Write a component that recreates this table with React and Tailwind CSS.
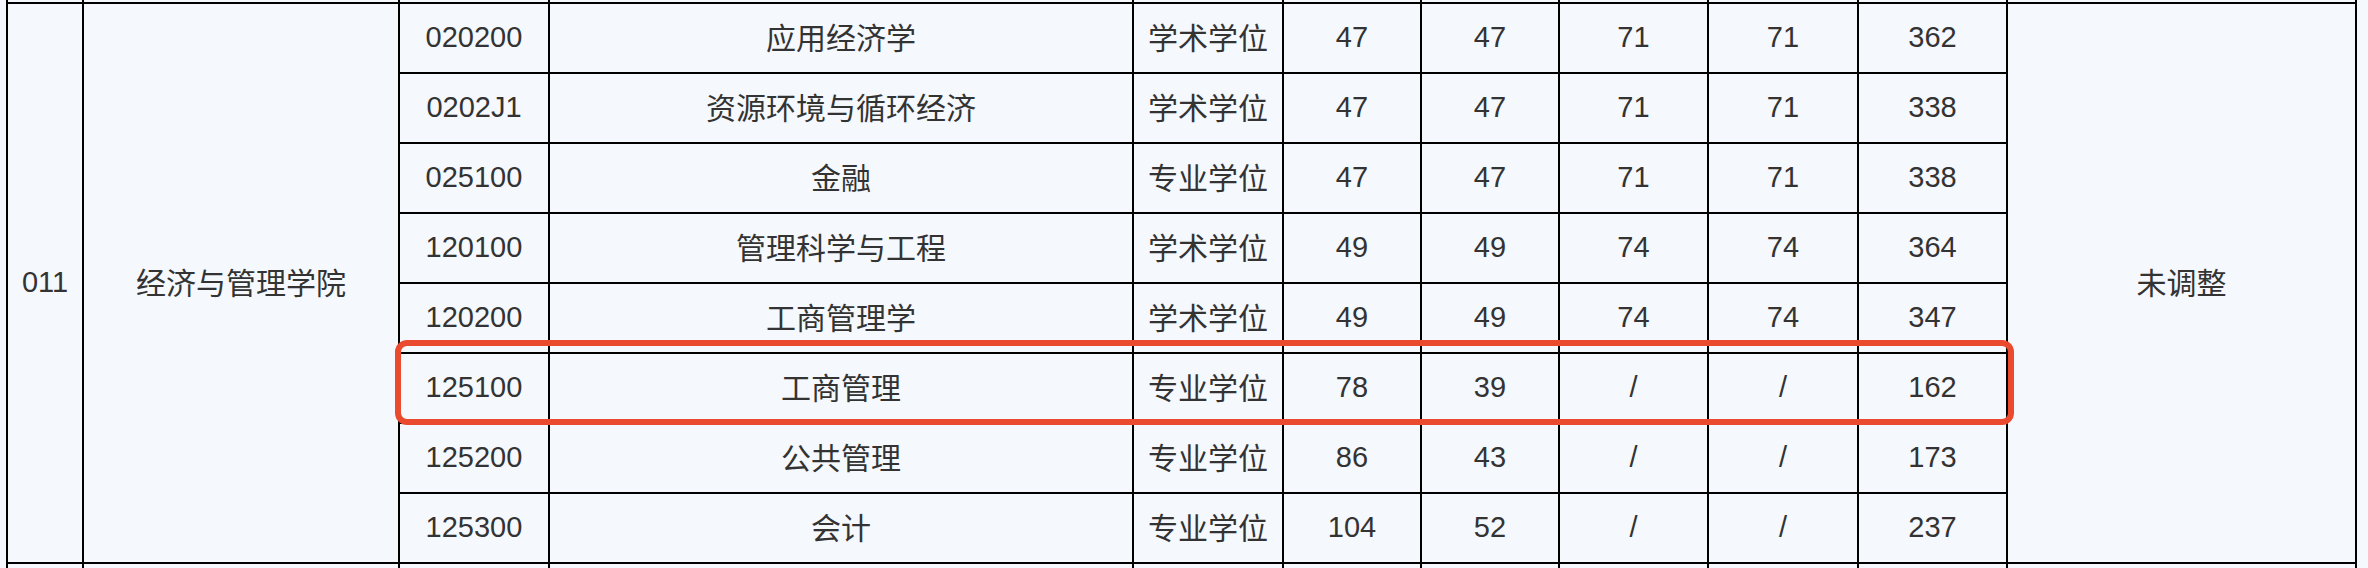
import React from 'react'

const rows = [
  ['020200', '应用经济学', '学术学位', '47', '47', '71', '71', '362'],
  ['0202J1', '资源环境与循环经济', '学术学位', '47', '47', '71', '71', '338'],
  ['025100', '金融', '专业学位', '47', '47', '71', '71', '338'],
  ['120100', '管理科学与工程', '学术学位', '49', '49', '74', '74', '364'],
  ['120200', '工商管理学', '学术学位', '49', '49', '74', '74', '347'],
  ['125100', '工商管理', '专业学位', '78', '39', '/', '/', '162'],
  ['125200', '公共管理', '专业学位', '86', '43', '/', '/', '173'],
  ['125300', '会计', '专业学位', '104', '52', '/', '/', '237'],
]

const cell = 'border-l-2 border-t-2 border-black flex items-center justify-center'

const App = () => {
  const stub = Array.from({ length: 11 })

  return (
    <div
      className="relative h-[568px] overflow-hidden bg-[#f5f8fc] text-[#333333]"
      style={{ fontFamily: '"Liberation Sans", "Noto Sans CJK SC", sans-serif' }}
    >
      <div className="ml-[6px] w-[2351px] border-r-2 border-black grid grid-cols-[76px_316px_150px_584px_150px_138px_138px_149px_150px_149px_349px] grid-rows-[2px_repeat(8,70px)_40px]">
        {/* row above, cut off */}
        {stub.map((_, i) => (
          <div key={'top' + i} className="border-l-2 border-black" />
        ))}

        {/* merged columns */}
        <div className={cell + ' col-start-1 row-start-2 row-span-8 text-[29px]'}>011</div>
        <div className={cell + ' col-start-2 row-start-2 row-span-8 text-[30px]'}>经济与管理学院</div>
        <div className={cell + ' col-start-11 row-start-2 row-span-8 text-[30px]'}>未调整</div>

        {rows.map((r) =>
          r.map((v, j) => (
            <div
              key={r[0] + j}
              className={cell + (j == 1 || j == 2 ? ' text-[30px]' : ' text-[29px]')}
            >
              {v}
            </div>
          ))
        )}

        {/* next row, cut off */}
        {stub.map((_, i) => (
          <div key={'bot' + i} className={cell} />
        ))}
      </div>

      {/* highlight box */}
      <div className="absolute left-[395px] top-[340px] w-[1619px] h-[85px] border-[6px] border-[#ea4a2d] rounded-[12px] pointer-events-none" />
    </div>
  )
}

export default App
